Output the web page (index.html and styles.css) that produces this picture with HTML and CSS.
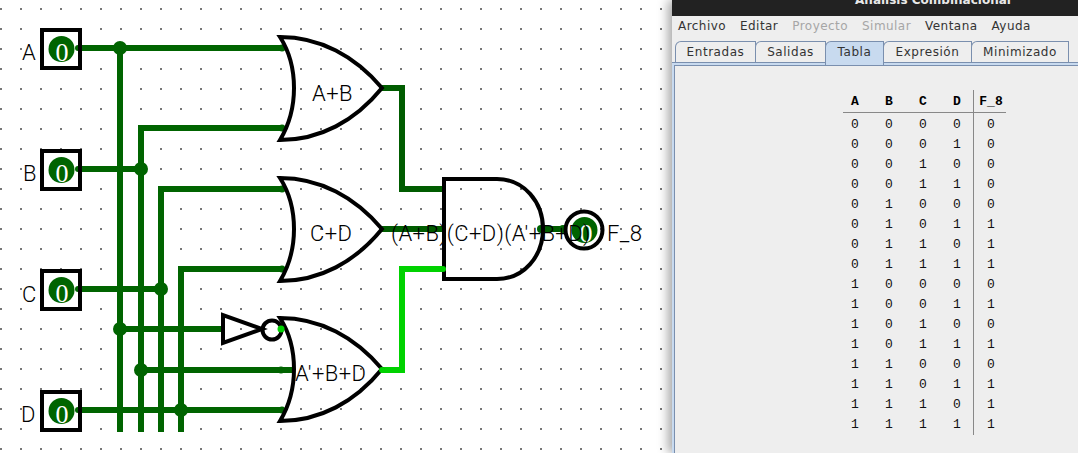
FILE: index.html
```html
<!DOCTYPE html>
<html lang="es">
<head>
<meta charset="utf-8">
<title>Análisis Combinacional</title>
<link rel="stylesheet" href="styles.css">
</head>
<body>
<main class="desktop">
  <svg class="circuit" width="672" height="453" viewBox="0 0 672 453" xmlns="http://www.w3.org/2000/svg">
    <defs>
      <pattern id="grid" x="0" y="8" width="20" height="20" patternUnits="userSpaceOnUse">
        <rect x="0" y="0" width="2" height="2" class="dot"/>
      </pattern>
      <path id="or" d="M280 0 C289 14 294 30 294 51 C294 72 289 88 280 103 C320 103 355 84 382 51 C355 19 320 0 280 0 Z"/>
    </defs>
    <rect x="0" y="0" width="672" height="453" fill="url(#grid)"/>

    <g class="wire">
      <path d="M78 48H282M120 48V432"/>
      <path d="M141 432V128H282M78 169H141"/>
      <path d="M161 432V189H282M78 289H161"/>
      <path d="M181 432V269H282M78 410H282"/>
      <path d="M120 329H222M141 370H292"/>
    </g>
    <g class="wire-out">
      <path d="M382 88H402V189H444M382 229H444"/>
      <path d="M540 229H566"/>
    </g>
    <path class="wire-on" d="M382 370H402V269H444"/>

    <g class="joint">
      <circle cx="120" cy="48" r="7"/><circle cx="141" cy="169" r="7"/>
      <circle cx="161" cy="289" r="7"/><circle cx="120" cy="329" r="7"/>
      <circle cx="141" cy="370" r="7"/><circle cx="181" cy="410" r="7"/>
      <circle cx="78" cy="48" r="3"/><circle cx="78" cy="169" r="3"/>
      <circle cx="78" cy="289" r="3"/><circle cx="78" cy="410" r="3"/>
      <circle cx="282" cy="48" r="3.5"/><circle cx="282" cy="128" r="3.5"/>
      <circle cx="282" cy="189" r="3.5"/><circle cx="282" cy="269" r="3.5"/>
      <circle cx="281" cy="370" r="3.5"/><circle cx="282" cy="410" r="3.5"/>
      <circle cx="222" cy="329" r="3"/><circle cx="382" cy="88" r="3"/>
      <circle cx="382" cy="229" r="3"/><circle cx="443" cy="189" r="3"/>
      <circle cx="443" cy="229" r="3"/><circle cx="541" cy="229" r="4"/>
      <circle cx="563" cy="229" r="4"/>
    </g>

    <g class="shape">
      <use href="#or" y="37"/>
      <use href="#or" y="178"/>
      <use href="#or" y="318"/>
      <path d="M444 179H497C524 179 543 202 543 229C543 256 524 279 497 279H444Z"/>
      <path d="M223 315V343L262 329Z"/>
      <circle cx="272" cy="330" r="9.5"/>
      <circle cx="584" cy="230" r="18.5"/>
      <rect x="42" y="30" width="38" height="38"/>
      <rect x="42" y="151" width="38" height="38"/>
      <rect x="42" y="271" width="38" height="38"/>
      <rect x="42" y="392" width="38" height="38"/>
    </g>
    <circle class="pin-on" cx="281" cy="329" r="3.5"/>
    <circle class="pin-on-end" cx="382" cy="370" r="3"/>
    <circle class="pin-on-end" cx="443" cy="269" r="3"/>

    <g class="led">
      <circle cx="61.5" cy="49" r="13"/><circle cx="61.5" cy="170" r="13"/>
      <circle cx="61.5" cy="290" r="13"/><circle cx="61.5" cy="411" r="13"/>
      <circle cx="584.5" cy="230" r="13"/>
    </g>
    <g class="led-text">
      <text x="62" y="61">0</text><text x="62" y="182">0</text>
      <text x="62" y="302">0</text><text x="62" y="423">0</text>
      <text x="586" y="242">0</text>
    </g>

    <g class="label">
      <text x="22" y="60">A</text>
      <text x="23" y="181">B</text>
      <text x="22" y="302">C</text>
      <text x="21" y="422">D</text>
      <text x="312" y="101">A+B</text>
      <text x="310" y="241">C+D</text>
      <text x="295" y="381">A'+B+D</text>
      <text x="391" y="241">(A+B)(C+D)(A'+B+D)</text>
      <text x="607" y="241">F_8</text>
    </g>
  </svg>

  <section class="window">
    <header class="titlebar"><span class="title">Análisis Combinacional</span></header>
    <nav class="menubar">
      <span class="menu">Archivo</span>
      <span class="menu">Editar</span>
      <span class="menu off">Proyecto</span>
      <span class="menu off">Simular</span>
      <span class="menu">Ventana</span>
      <span class="menu">Ayuda</span>
    </nav>
    <div class="tabs">
      <span class="tab t1">Entradas</span>
      <span class="tab t2">Salidas</span>
      <span class="tab t3 active">Tabla</span>
      <span class="tab t4">Expresión</span>
      <span class="tab t5">Minimizado</span>
    </div>
    <div class="panel">
      <div class="content">
        <div class="truth">
          <div class="head"><b>A</b><b>B</b><b>C</b><b>D</b><b class="out">F_8</b></div>
          <div class="rule"></div>
          <div class="rows">
            <div class="row"><i>0</i><i>0</i><i>0</i><i>0</i><i class="out">0</i></div>
            <div class="row"><i>0</i><i>0</i><i>0</i><i>1</i><i class="out">0</i></div>
            <div class="row"><i>0</i><i>0</i><i>1</i><i>0</i><i class="out">0</i></div>
            <div class="row"><i>0</i><i>0</i><i>1</i><i>1</i><i class="out">0</i></div>
            <div class="row"><i>0</i><i>1</i><i>0</i><i>0</i><i class="out">0</i></div>
            <div class="row"><i>0</i><i>1</i><i>0</i><i>1</i><i class="out">1</i></div>
            <div class="row"><i>0</i><i>1</i><i>1</i><i>0</i><i class="out">1</i></div>
            <div class="row"><i>0</i><i>1</i><i>1</i><i>1</i><i class="out">1</i></div>
            <div class="row"><i>1</i><i>0</i><i>0</i><i>0</i><i class="out">0</i></div>
            <div class="row"><i>1</i><i>0</i><i>0</i><i>1</i><i class="out">1</i></div>
            <div class="row"><i>1</i><i>0</i><i>1</i><i>0</i><i class="out">0</i></div>
            <div class="row"><i>1</i><i>0</i><i>1</i><i>1</i><i class="out">1</i></div>
            <div class="row"><i>1</i><i>1</i><i>0</i><i>0</i><i class="out">0</i></div>
            <div class="row"><i>1</i><i>1</i><i>0</i><i>1</i><i class="out">1</i></div>
            <div class="row"><i>1</i><i>1</i><i>1</i><i>0</i><i class="out">1</i></div>
            <div class="row"><i>1</i><i>1</i><i>1</i><i>1</i><i class="out">1</i></div>
          </div>
        </div>
      </div>
    </div>
  </section>
</main>
</body>
</html>
```
FILE: styles.css
```css
html, body { margin: 0; padding: 0; height: 100%; overflow: hidden; background: #fff; }
.desktop { display: flex; width: 1078px; height: 453px; }

.circuit { display: block; flex: none; width: 672px; height: 453px; }
.dot { fill: #777; }
.wire path, .wire-out path, .wire-on { fill: none; stroke-width: 6; stroke-linejoin: miter; }
.wire path { stroke: #006400; }
.wire-out path { stroke: #005c00; }
.wire-on { stroke: #00d200; }
.joint circle { fill: #006400; }
.shape path, .shape use, .shape circle, .shape rect { fill: none; stroke: #000; stroke-width: 4; }
.pin-on, .pin-on-end { fill: #00d200; }
.led circle { fill: #006400; }
.led-text text { fill: #fff; font: 26px "Liberation Serif", serif; text-anchor: middle; }
.label text { fill: #000; font: 300 22px Roboto, "Liberation Sans", sans-serif; letter-spacing: .4px; }

.window { flex: 1; display: flex; flex-direction: column; min-width: 0; background: #eee; box-shadow: -4px 0 10px rgba(0,0,0,.35); font-family: "DejaVu Sans", sans-serif; color: #333; position: relative; }
.titlebar { height: 16px; flex: none; background: #222; color: #e8e8e8; font-size: 12px; font-weight: bold; line-height: 0; padding-left: 116px; box-sizing: border-box; text-align: center; overflow: hidden; }
.menubar { height: 24px; flex: none; display: flex; align-items: center; padding: 0 0 4px 6px; box-sizing: border-box; gap: 14px; font-size: 12px; letter-spacing: .45px; background: #eee; }
.menu.off { color: #a6a6a6; }

.tabs { height: 22px; flex: none; display: flex; align-items: flex-end; padding-left: 3px; box-sizing: border-box; }
.tab { height: 21px; box-sizing: border-box; border: 1px solid #7a8fae; border-bottom: 0; border-top-left-radius: 6px 6px; display: flex; align-items: center; justify-content: center; font-size: 12px; letter-spacing: .55px; padding-bottom: 1px; background: #eee; margin-right: -1px; }
.t1 { width: 81px; } .t2 { width: 71px; } .t3 { width: 59px; } .t4 { width: 89px; } .t5 { width: 98px; }
.tab.active { background: #c8daef; height: 24px; position: relative; margin-bottom: -3px; padding-bottom: 4px; }

.panel { flex: 1; display: flex; min-height: 0; border-top: 1px solid #7a8fae; padding: 2px 0 0 2px; background: #c8daef; }
.content { flex: 1; border: solid #7a8fae; border-width: 1px 0 0 1px; padding: 24px 0 0 168px; background: #eee; }
.truth { width: 163px; font: 13px/20px "Liberation Mono", monospace; color: #111; }
.head, .row { display: grid; grid-template-columns: 34px 34px 34px 34px 34px; text-align: center; margin-left: -5px; }
.head { height: 22px; line-height: 24px; }
.head b { font-weight: bold; color: #000; }
.rule { height: 1px; background: #888; }
.rows { padding-top: 2px; }
.rows .out { margin-top: -2px; padding-top: 2px; }
.row i { font-style: normal; }
.head .out, .row .out { border-left: 1px solid #888; margin-left: -1px; }
```
